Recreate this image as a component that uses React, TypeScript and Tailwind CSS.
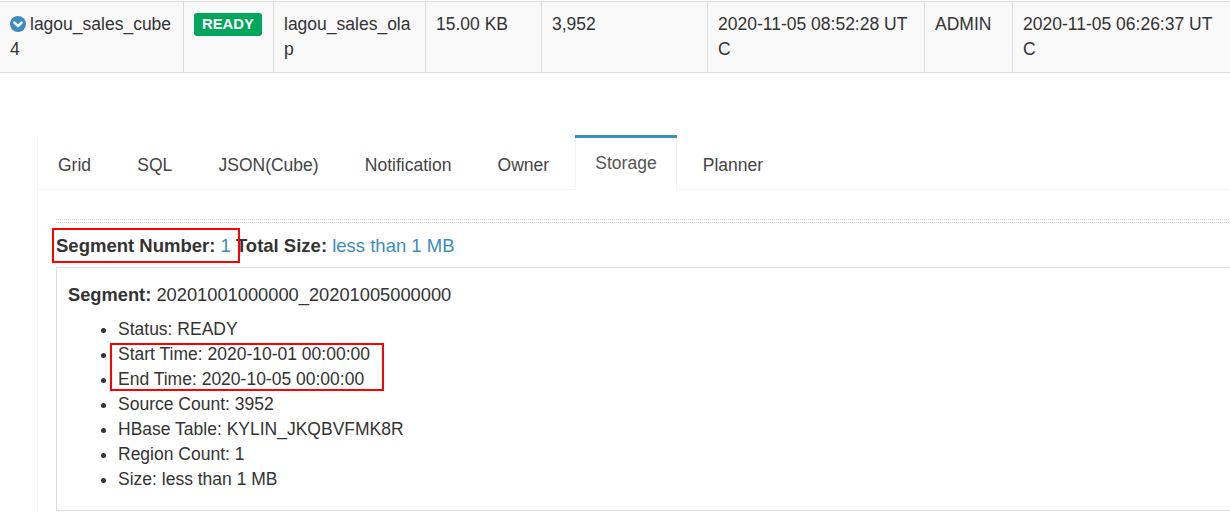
import React from 'react';

const tabs = ['Grid', 'SQL', 'JSON(Cube)', 'Notification', 'Owner', 'Storage', 'Planner'];

const details = [
  'Status: READY',
  'Start Time: 2020-10-01 00:00:00',
  'End Time: 2020-10-05 00:00:00',
  'Source Count: 3952',
  'HBase Table: KYLIN_JKQBVFMK8R',
  'Region Count: 1',
  'Size: less than 1 MB',
];

function ChevronCircle() {
  return (
    <svg viewBox="0 0 16 16" className="inline-block w-4 h-4 mr-[4px] align-[-2px]">
      <circle cx="8" cy="8" r="8" fill="#3c8dbc" />
      <path d="M4.4 6.6 L8 10.1 L11.6 6.6" fill="none" stroke="#fff" strokeWidth="2.4" strokeLinecap="round" strokeLinejoin="round" />
    </svg>
  );
}

function CubeRow() {
  const cell = 'px-[10px] py-[10px] border-l border-[#ddd] break-all';
  return (
    <div className="mt-px grid grid-cols-[183px_90px_152px_116px_166px_217px_88px_218px] bg-[#f9f9f9] border-y border-[#ddd] text-[17.5px] leading-[25px] text-[#333]">
      <div className="px-[10px] py-[10px] break-all">
        <ChevronCircle />
        lagou_sales_cube4
      </div>
      <div className={cell}>
        <span className="block w-fit mt-px h-[23px] px-[8px] rounded-[3px] bg-[#00a65a] text-white font-bold text-[14.8px] leading-[23px]">
          READY
        </span>
      </div>
      <div className={cell}>lagou_sales_olap</div>
      <div className={cell}>15.00 KB</div>
      <div className={cell}>3,952</div>
      <div className={cell}>2020-11-05 08:52:28 UTC</div>
      <div className={cell}>ADMIN</div>
      <div className={cell}>2020-11-05 06:26:37 UTC</div>
    </div>
  );
}

function TabBar() {
  return (
    <ul className="-mt-[2px] flex h-[55px] border-b border-[#f4f4f4] text-[17.5px] leading-[25px] text-[#444]">
      {tabs.map((t) => {
        const active = t === 'Storage';
        return (
          <li
            key={t}
            className={
              active
                ? 'mr-[6.2px] -mb-px border-t-[3px] border-[#3c8dbc] bg-white'
                : 'mr-[6.2px] border-t-[3px] border-transparent'
            }
          >
            <a
              className={
                active
                  ? 'block h-full px-[19px] pt-[12.5px] border-x border-[#f4f4f4] text-[#555]'
                  : 'block h-full px-[19px] pt-[15px] border-x border-transparent'
              }
            >
              {t}
            </a>
          </li>
        );
      })}
    </ul>
  );
}

export default function App() {
  return (
    <div className="w-[1230px] h-[512px] overflow-hidden bg-white text-[#333] font-['Liberation_Sans',Arial,sans-serif]">
      <CubeRow />

      <div className="ml-[37px] mt-[64px] w-[1260px] border-l border-[#f4f4f4] bg-white">
        <TabBar />

        <div className="pl-[18px]">
          <div className="mt-[29px] h-[4px] border-y border-dotted border-[#ccc]" />

          <div className="relative mt-[10px] text-[18.5px] leading-[25px]">
            <b>Segment Number:</b> <span className="text-[#3c8dbc]">1</span>{' '}
            <b>Total Size:</b> <span className="text-[#3c8dbc]">less than 1 MB</span>
            <div className="absolute -left-[4px] -top-[5px] w-[188px] h-[35px] border-2 border-[#f00]" />
          </div>

          <div className="mt-[9px] border border-[#ddd] pl-[11px] pt-[14px] pb-[18px]">
            <div className="text-[18.3px] leading-[25px]">
              <b>Segment:</b> 20201001000000_20201005000000
            </div>
            <ul className="relative mt-[10px] pl-[50px] list-disc text-[17.5px] leading-[25px]">
              {details.map((d) => (
                <li key={d}>{d}</li>
              ))}
              <div className="absolute left-[42px] top-[26px] w-[274px] h-[48px] border-2 border-[#f00]" />
            </ul>
          </div>
        </div>
      </div>
    </div>
  );
}
